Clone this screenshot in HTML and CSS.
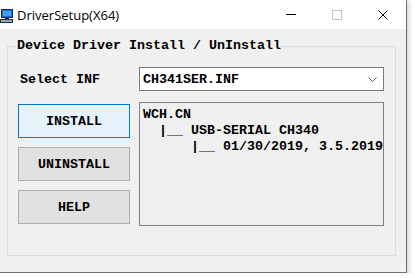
FILE: index.html
```html
<!DOCTYPE html>
<html lang="en">

<head>
    <meta charset="UTF-8">
    <title>DriverSetup(X64)</title>
    <link rel="stylesheet" href="styles.css">
</head>

<body>
    <div class="window">
        <div class="titlebar">
            <svg class="app-icon" width="14" height="16" viewBox="0 0 14 16">
                <rect x="1.5" y="2.5" width="11" height="8" fill="#1f6fd8" stroke="#1b2a5a"/>
                <rect x="3" y="4" width="8" height="5" fill="#3fa0ff"/>
                <rect x="5" y="11" width="4" height="1" fill="#1b2a5a"/>
                <rect x="0.5" y="12.5" width="12" height="3" fill="#9aa3b0" stroke="#2b2f3a"/>
            </svg>
            <span class="title">DriverSetup(X64)</span>
            <div class="controls">
                <div class="ctl"><span class="ctl-min"></span></div>
                <div class="ctl"><span class="ctl-max"></span></div>
                <div class="ctl">
                    <svg width="10" height="10" viewBox="0 0 10 10">
                        <path d="M0.5 0.5 L9.5 9.5 M9.5 0.5 L0.5 9.5" stroke="#000" stroke-width="1"/>
                    </svg>
                </div>
            </div>
        </div>

        <div class="client">
            <div class="group">
                <span class="group-caption">Device Driver Install / UnInstall</span>

                <div class="row">
                    <span class="label">Select INF</span>
                    <div class="combo">
                        <span>CH341SER.INF</span>
                        <svg class="chevron" width="9" height="5" viewBox="0 0 9 5">
                            <path d="M0.5 0.5 L4.5 4.5 L8.5 0.5" fill="none" stroke="#606060"/>
                        </svg>
                    </div>
                </div>

                <div class="row main">
                    <div class="buttons">
                        <button class="btn default">INSTALL</button>
                        <button class="btn">UNINSTALL</button>
                        <button class="btn">HELP</button>
                    </div>
                    <div class="info">
                        <div class="line">WCH.CN</div>
                        <div class="line">  |__ USB-SERIAL CH340</div>
                        <div class="line">      |__ 01/30/2019, 3.5.2019</div>
                    </div>
                </div>
            </div>
        </div>
    </div>
</body>

</html>
```

FILE: styles.css
```css
body {
    margin: 0;
    background-color: #fff;
}

.window {
    width: 407px;
    height: 273px;
    box-sizing: border-box;
    border-right: 1px solid #707070;
    border-bottom: 1px solid #707070;
    background-color: #f0f0f0;
    box-shadow: 1px 1px 6px rgba(0, 0, 0, 0.25);
    display: flex;
    flex-direction: column;
}

.titlebar {
    height: 29px;
    background-color: #fff;
    display: flex;
    align-items: center;
    flex-shrink: 0;
}

.app-icon {
    margin-top: 1px;
}

.title {
    margin-left: 3px;
    margin-top: 1px;
    font-family: "Open Sans", "Liberation Sans", sans-serif;
    font-size: 13px;
    color: #000;
}

.controls {
    margin-left: auto;
    display: flex;
    height: 100%;
}

.ctl {
    width: 46px;
    height: 100%;
    display: flex;
    align-items: center;
    justify-content: center;
}

.ctl-min {
    width: 10px;
    height: 1px;
    background-color: #000;
}

.ctl-max {
    width: 8px;
    height: 8px;
    border: 1px solid #c6c6c6;
}

.client {
    flex: 1;
    padding: 17px 0 0 7px;
}

.group {
    position: relative;
    width: 389px;
    height: 210px;
    box-sizing: border-box;
    border: 1px solid #dcdcdc;
    padding: 20px 0 0 10px;
    font-family: "Liberation Mono", "DejaVu Sans Mono", monospace;
    font-weight: bold;
    font-size: 13.34px;
    color: #000;
}

.group-caption {
    position: absolute;
    left: 8px;
    top: -9px;
    padding: 0 1px;
    line-height: 16px;
    background-color: #f0f0f0;
}

.row {
    display: flex;
    align-items: center;
}

.label {
    width: 119px;
    padding-left: 2px;
}

.combo {
    width: 245px;
    height: 24px;
    box-sizing: border-box;
    border: 1px solid #7a7a7a;
    background-color: #fff;
    display: flex;
    align-items: center;
    padding-left: 3px;
}

.chevron {
    margin-left: auto;
    margin-right: 6px;
}

.row.main {
    align-items: flex-start;
    margin-top: 11px;
    gap: 9px;
}

.buttons {
    display: flex;
    flex-direction: column;
    gap: 9px;
    padding-top: 2px;
}

.btn {
    width: 112px;
    height: 34px;
    border: 1px solid #adadad;
    background-color: #e1e1e1;
    font-family: inherit;
    font-weight: bold;
    font-size: 13.34px;
    color: #000;
    padding: 0;
}

.btn.default {
    border-color: #0078d7;
    background-color: #e5f1fb;
}

.info {
    width: 245px;
    height: 124px;
    box-sizing: border-box;
    border: 1px solid #828282;
    padding: 4px 0 0 3px;
    line-height: 16px;
    overflow: hidden;
}

.line {
    white-space: pre;
}
```
